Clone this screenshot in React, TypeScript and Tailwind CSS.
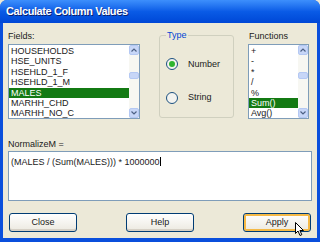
import React from "react";

const fields = ["HOUSEHOLDS", "HSE_UNITS", "HSEHLD_1_F", "HSEHLD_1_M", "MALES", "MARHH_CHD", "MARHH_NO_C"];
const funcs = ["+", "-", "*", "/", "%", "Sum()", "Avg()"];

function ScrollBar() {
  return (
    <div className="flex w-[10px] flex-col bg-[#f7f7f2]">
      <div className="flex h-[10px] items-center justify-center rounded-[2px] bg-[#c7d6f7] border border-[#b4c8f3]">
        <svg width="6" height="4" viewBox="0 0 6 4"><path d="M0.5 3.5 L3 1 L5.5 3.5" fill="none" stroke="#4d6185" strokeWidth="1.2" /></svg>
      </div>
      <div className="mt-[17px] h-[7px] rounded-[2px] bg-[#c7d6f7] border border-[#b4c8f3]" />
      <div className="flex-1" />
      <div className="flex h-[10px] items-center justify-center rounded-[2px] bg-[#c7d6f7] border border-[#b4c8f3]">
        <svg width="6" height="4" viewBox="0 0 6 4"><path d="M0.5 0.5 L3 3 L5.5 0.5" fill="none" stroke="#4d6185" strokeWidth="1.2" /></svg>
      </div>
    </div>
  );
}

function ListBox({ items, selected, width }: { items: string[]; selected: string; width: string }) {
  return (
    <div className={`flex h-[75px] ${width} border border-[#7f9db9] bg-white`}>
      <div className="flex-1 overflow-hidden pt-[1px]">
        {items.map((it) => (
          <div
            key={it}
            className={`h-[10.4px] pl-[2px] leading-[10.4px] ${it === selected ? "bg-[#137a13] text-white" : "text-[#1a1a1a]"}`}
          >
            {it}
          </div>
        ))}
      </div>
      <ScrollBar />
    </div>
  );
}

function Radio({ checked, label }: { checked: boolean; label: string }) {
  return (
    <div className="flex items-center gap-[10px]">
      <div className="flex h-[12px] w-[12px] items-center justify-center rounded-full border border-[#1c5180] bg-[#f3f3ef]">
        {checked && <div className="h-[6px] w-[6px] rounded-full bg-[#2fb52f]" />}
      </div>
      <span>{label}</span>
    </div>
  );
}

function Button({ label, def }: { label: string; def?: boolean }) {
  return (
    <div
      className={`flex h-[19px] w-[68px] items-center justify-center rounded-[3px] border border-[#003c74] bg-gradient-to-b from-white to-[#ece9e0] text-[#1a1a1a] ${def ? "shadow-[inset_0_0_0_2px_#f5b946]" : "shadow-[inset_0_-2px_0_#d6d0c5]"}`}
    >
      {label}
    </div>
  );
}

export default function App() {
  return (
    <div className="h-[242px] w-[320px] overflow-hidden bg-[#ece9d8] font-['Liberation_Sans',sans-serif] text-[9px]">
      <div className="flex h-full flex-col rounded-t-[7px] bg-[#0a4fdc]">
        <div className="flex h-[23px] items-center rounded-t-[7px] bg-gradient-to-b from-[#3d8ffc] via-[#0a5be6] to-[#0047d6] pl-[6px]">
          <span className="text-[11px] font-bold tracking-[-0.4px] text-white [text-shadow:1px_1px_0_#0a1e6e]">Calculate Column Values</span>
        </div>
        <div className="mx-[3px] mb-[4px] flex flex-1 flex-col bg-[#ece9d8] px-[5px] text-[#1a1a1a]">
          <div className="mt-[7px] flex">
            <div className="flex flex-col">
              <div className="mb-[2px] h-[12px] leading-[12px]">Fields:</div>
              <ListBox items={fields} selected="MALES" width="w-[132px]" />
            </div>
            <div className="ml-[19px] mt-[5px] h-[83px] w-[75px] rounded-[3px] border border-[#d0d0bf] pl-[6px]">
              <div className="-mt-[7px] w-fit bg-[#ece9d8] px-[1px] text-[#0046d5]">Type</div>
              <div className="mt-[15px]"><Radio checked label="Number" /></div>
              <div className="mt-[20px]"><Radio checked={false} label="String" /></div>
            </div>
            <div className="ml-[14px] flex flex-col">
              <div className="mb-[2px] h-[12px] pl-[1px] leading-[12px]">Functions</div>
              <ListBox items={funcs} selected="Sum()" width="w-[61px]" />
            </div>
          </div>
          <div className="mt-[19px] h-[12px] leading-[12px]">NormalizeM =</div>
          <div className="mt-[1px] h-[50px] border border-[#7f9db9] bg-white px-[2px] pt-[4px]">
            (MALES / (Sum(MALES))) * 1000000<span className="ml-[0.5px] inline-block h-[9px] w-[1px] translate-y-[1px] bg-black" />
          </div>
          <div className="mt-[12px] flex justify-between px-[1px]">
            <Button label="Close" />
            <Button label="Help" />
            <div className="relative">
              <Button label="Apply" def />
              <svg className="absolute left-[52px] top-[9px]" width="10" height="15" viewBox="0 0 10 15">
                <path d="M0.5 0.5 L0.5 11.5 L3 9 L5 13.5 L6.8 12.7 L4.9 8.5 L8.5 8.5 Z" fill="white" stroke="black" strokeWidth="1" />
              </svg>
            </div>
          </div>
        </div>
      </div>
    </div>
  );
}
